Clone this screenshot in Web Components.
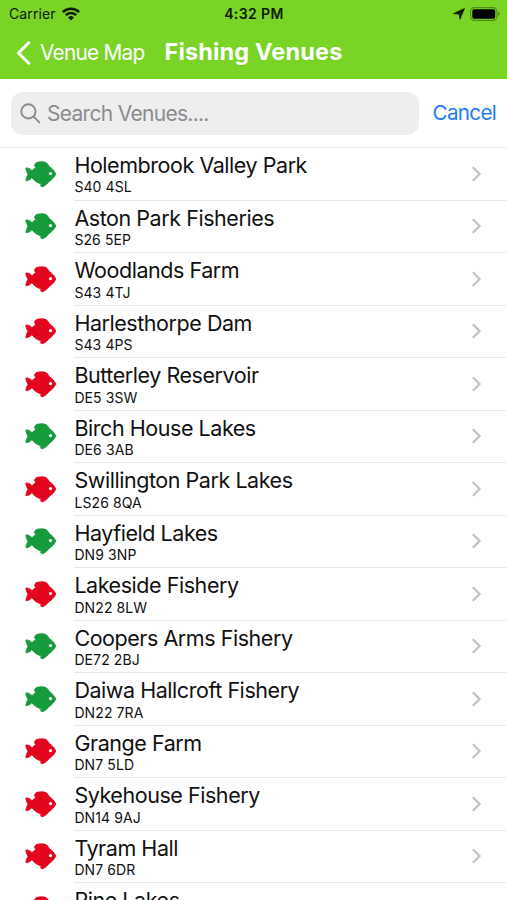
<!DOCTYPE html>
<html lang="en">
<head>
<meta charset="utf-8">
<title>Fishing Venues</title>
<style>
    body {
        margin: 0;
        height: 900px;
        overflow: hidden;
        background: #fff;
        font-family: Inter, "Liberation Sans", sans-serif;
    }
</style>
</head>
<body>
<venue-app></venue-app>

<script>
class StatusBar extends HTMLElement {
    connectedCallback() {
        this.attachShadow({ mode: 'open' });
        this.shadowRoot.innerHTML = `
            <style>
                :host {
                    display: grid;
                    grid-template-columns: 1fr auto 1fr;
                    align-items: center;
                    height: 27px;
                    padding: 0 7px 0 9px;
                    color: #0c1a03;
                    font-size: 14px;
                    line-height: 27px;
                }
                .left, .right { display: flex; align-items: center; }
                .left { gap: 6px; }
                .right { justify-content: flex-end; gap: 5px; }
                .carrier { letter-spacing: 0.12px; }
                .time { font-weight: 600; letter-spacing: 0.4px; margin-right: 1px; }
                svg { display: block; }
            </style>
            <div class="left">
                <span class="carrier">Carrier</span>
                <svg width="18" height="14" viewBox="0 0 18 14" fill="none" stroke="#0c1a03" stroke-width="2.6">
                    <path d="M.9 5.1a11.6 11.6 0 0 1 16.2 0"/>
                    <path d="M3.8 8.2a7.4 7.4 0 0 1 10.4 0"/>
                    <path d="M9 13.4 6.1 10.5a4.2 4.2 0 0 1 5.8 0z" fill="#0c1a03" stroke="none"/>
                </svg>
            </div>
            <span class="time">4:32 PM</span>
            <div class="right">
                <svg width="12" height="12" viewBox="0 0 12 12"><path d="M11.4.6 7 11.2 6.1 6.1.6 5.6z" fill="#0c1a03" stroke="#0c1a03" stroke-width=".8" stroke-linejoin="round"/></svg>
                <svg width="30" height="14" viewBox="0 0 30 14">
                    <rect x=".6" y=".6" width="26.3" height="12.8" rx="3.8" fill="none" stroke="#4f8c18" stroke-width="1.1"/>
                    <rect x="2.3" y="2.3" width="22.9" height="9.4" rx="1.6" fill="#000"/>
                    <path d="M28.1 4.7c2 .8 2 3.8 0 4.6z" fill="#4f8c18"/>
                </svg>
            </div>
        `;
    }
}

class NavBar extends HTMLElement {
    connectedCallback() {
        this.attachShadow({ mode: 'open' });
        this.shadowRoot.innerHTML = `
            <style>
                :host {
                    display: flex;
                    align-items: center;
                    height: 52px;
                    padding-left: 16px;
                    color: #fff;
                    white-space: nowrap;
                }
                svg { display: block; margin-right: 9px; }
                .back {
                    width: 124.5px;
                    font-size: 20.8px;
                    letter-spacing: -0.75px;
                    line-height: 50px;
                }
                .title {
                    font-size: 23.5px;
                    font-weight: 700;
                    letter-spacing: 0.15px;
                    line-height: 48px;
                    padding-bottom: 2px;
                }
            </style>
            <svg width="15" height="24" viewBox="0 0 15 24" fill="none" stroke="#fff" stroke-width="3" stroke-linecap="round" stroke-linejoin="round"><path d="M12.7 1.8 2.5 12l10.2 10.2"/></svg>
            <span class="back"><slot name="back"></slot></span>
            <span class="title"><slot></slot></span>
        `;
    }
}

class SearchBar extends HTMLElement {
    connectedCallback() {
        this.attachShadow({ mode: 'open' });
        this.shadowRoot.innerHTML = `
            <style>
                :host {
                    display: flex;
                    box-sizing: border-box;
                    height: 69px;
                    padding: 13px 0 0 11px;
                    border-bottom: 1px solid #e8e8e8;
                    white-space: nowrap;
                }
                .field {
                    display: flex;
                    align-items: center;
                    width: 408px;
                    height: 43px;
                    border-radius: 12px;
                    background: #eeeeee;
                    color: #8b8b8f;
                    font-size: 21px;
                    letter-spacing: -0.7px;
                }
                svg { margin: 0 6px 1px 9px; }
                .cancel {
                    margin-left: 13.5px;
                    color: #1a7cf6;
                    font-size: 20.6px;
                    letter-spacing: -0.65px;
                    line-height: 41px;
                }
            </style>
            <div class="field">
                <svg width="21" height="21" viewBox="0 0 21 21" fill="none" stroke="#8b8b8f" stroke-width="1.9" stroke-linecap="round"><circle cx="8.4" cy="8.4" r="7.1"/><path d="m13.6 13.6 5.8 5.8"/></svg>
                <span class="hint"><slot></slot></span>
            </div>
            <span class="cancel">Cancel</span>
        `;
    }
}

class VenueRow extends HTMLElement {
    connectedCallback() {
        const fish = this.getAttribute('status') === 'open' ? '#159a3c' : '#e3041d';

        this.attachShadow({ mode: 'open' });
        this.shadowRoot.innerHTML = `
            <style>
                :host {
                    display: flex;
                    height: 52.52px;
                    padding-left: 25px;
                    color: #111;
                    white-space: nowrap;
                }
                .fish { display: block; flex: none; margin: 12.5px 17.4px 0 0; }
                .body {
                    display: flex;
                    flex: 1;
                    justify-content: space-between;
                    box-sizing: border-box;
                    border-bottom: 1px solid #e8e8e8;
                }
                .name {
                    font-size: 21.5px;
                    letter-spacing: -0.45px;
                    line-height: 26px;
                    padding-top: 4.2px;
                }
                .code {
                    font-size: 14px;
                    letter-spacing: 0.1px;
                    line-height: 17px;
                    padding-top: 0.3px;
                }
                .chevron { display: block; margin: 17.5px 25px 0 0; }
            </style>
            <svg class="fish" width="32" height="27" viewBox="0 0 32 27">
                <path fill="${fish}" stroke="${fish}" stroke-width=".8" stroke-linejoin="round" d="M.8 7C3 6.6 5.2 7.7 7 9.7c1.2-1.2 2.4-2.2 3.8-3L9.3 4.3 11.2 1.6C14.5.6 19.5.2 22.2 2.4l2.3 3.4c2.7 1.7 5 4.2 6.3 7.2-1.3 3-3.4 5.5-6.3 7.2-2 2.1-4.1 4.8-7.2 5.6l-1.6-.7.4-2.1c-3.5-.9-6.7-3.2-9.2-6.3-1.7 1.8-3.7 3.1-6 3 .1-2.3.8-4.3 2.1-6.5C1.8 11.1.9 9.2.8 7z"/>
                <circle cx="25.5" cy="12.6" r="1.6" fill="#fff"/>
            </svg>
            <div class="body">
                <div>
                    <div class="name"><slot></slot></div>
                    <div class="code"><slot name="code"></slot></div>
                </div>
                <svg class="chevron" width="11" height="16" viewBox="0 0 11 16" fill="none" stroke="#c2c2c5" stroke-width="2.2"><path d="m1.8 1.3 6.8 6.7-6.8 6.7"/></svg>
            </div>
        `;
    }
}

const venues = [
    ['Holembrook Valley Park', 'S40 4SL', 'open'],
    ['Aston Park Fisheries', 'S26 5EP', 'open'],
    ['Woodlands Farm', 'S43 4TJ', 'closed'],
    ['Harlesthorpe Dam', 'S43 4PS', 'closed'],
    ['Butterley Reservoir', 'DE5 3SW', 'closed'],
    ['Birch House Lakes', 'DE6 3AB', 'open'],
    ['Swillington Park Lakes', 'LS26 8QA', 'closed'],
    ['Hayfield Lakes', 'DN9 3NP', 'open'],
    ['Lakeside Fishery', 'DN22 8LW', 'closed'],
    ['Coopers Arms Fishery', 'DE72 2BJ', 'open'],
    ['Daiwa Hallcroft Fishery', 'DN22 7RA', 'open'],
    ['Grange Farm', 'DN7 5LD', 'closed'],
    ['Sykehouse Fishery', 'DN14 9AJ', 'closed'],
    ['Tyram Hall', 'DN7 6DR', 'closed'],
    ['Pine Lakes', '', 'closed']
];

class VenueApp extends HTMLElement {
    connectedCallback() {
        this.attachShadow({ mode: 'open' });
        this.shadowRoot.innerHTML = `
            <style>
                :host {
                    display: block;
                    height: 900px;
                    overflow: hidden;
                }
                header { background: #79d426; }
            </style>
            <header>
                <status-bar></status-bar>
                <nav-bar><span slot="back">Venue Map</span>Fishing Venues</nav-bar>
            </header>
            <search-bar>Search Venues....</search-bar>
            <main>
                ${venues.map(([name, code, status]) => `<venue-row status="${status}">${name}<span slot="code">${code}</span></venue-row>`).join('')}
            </main>
        `;
    }
}

customElements.define('status-bar', StatusBar);
customElements.define('nav-bar', NavBar);
customElements.define('search-bar', SearchBar);
customElements.define('venue-row', VenueRow);
customElements.define('venue-app', VenueApp);
</script>
</body>
</html>
